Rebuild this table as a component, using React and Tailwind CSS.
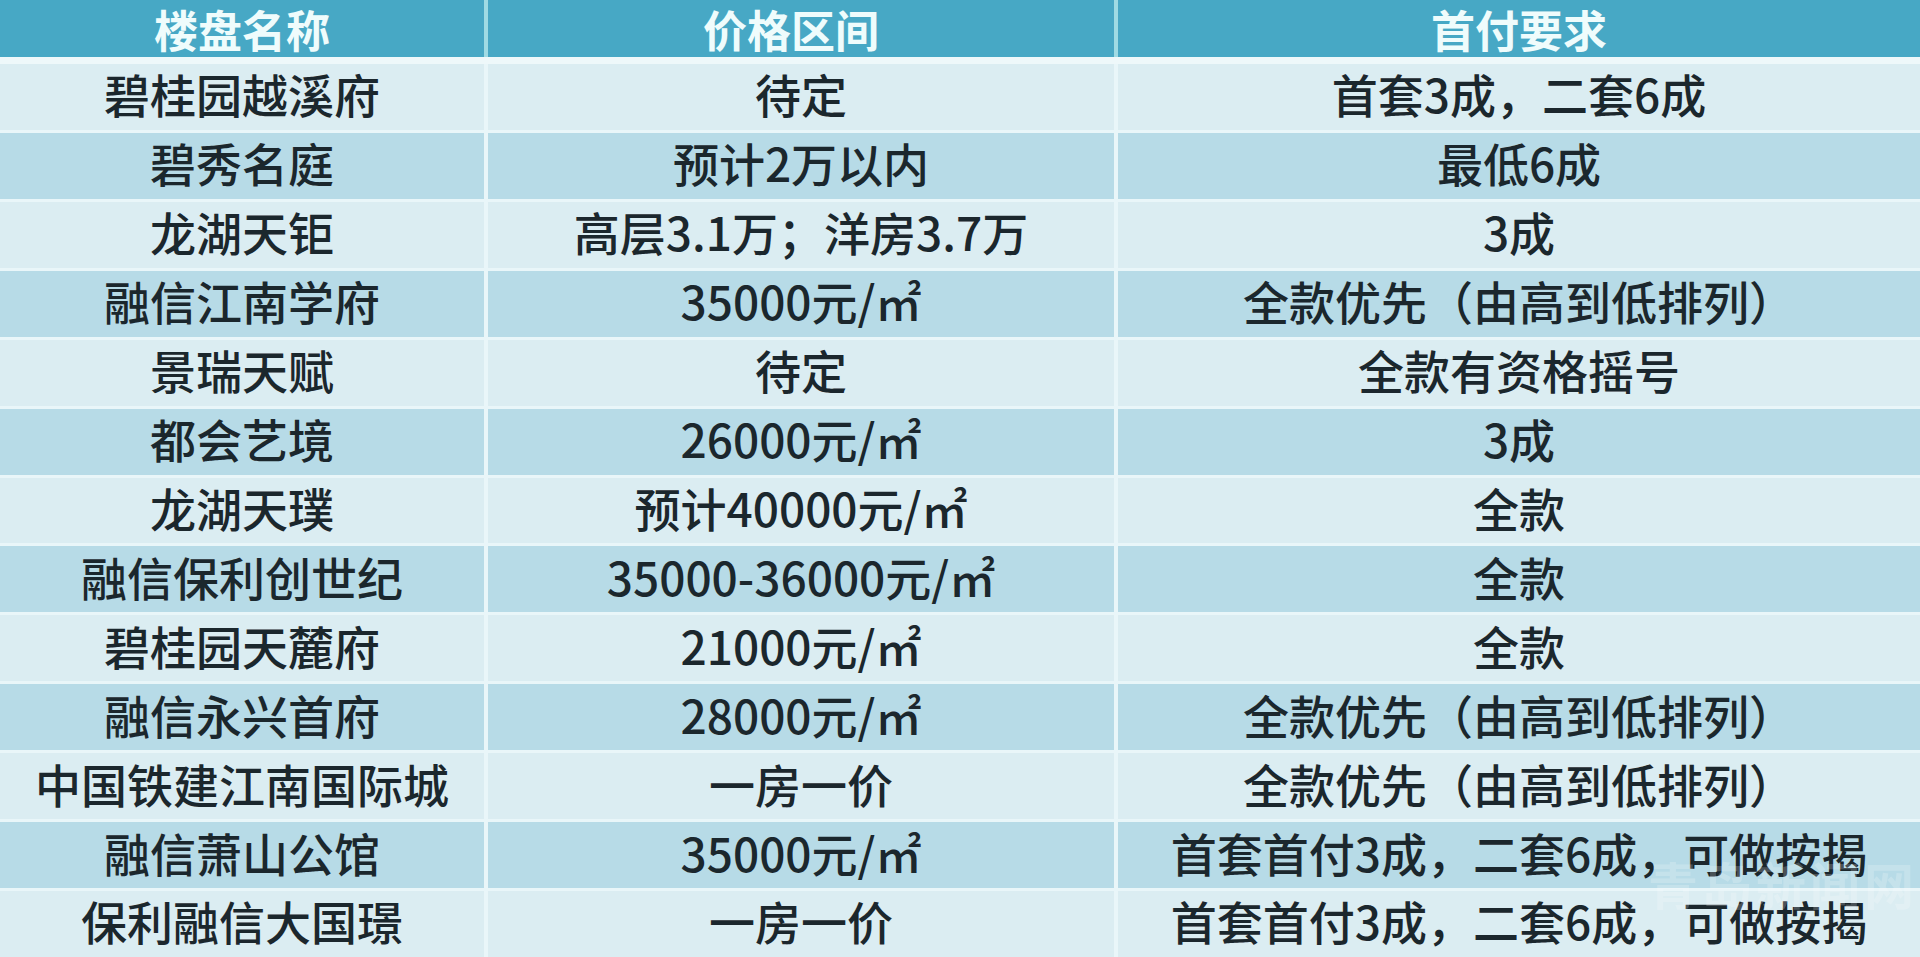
import React from "react";

const rows = [
  ["碧桂园越溪府", "待定", "首套3成，二套6成"],
  ["碧秀名庭", "预计2万以内", "最低6成"],
  ["龙湖天钜", "高层3.1万；洋房3.7万", "3成"],
  ["融信江南学府", "35000元/㎡", "全款优先（由高到低排列）"],
  ["景瑞天赋", "待定", "全款有资格摇号"],
  ["都会艺境", "26000元/㎡", "3成"],
  ["龙湖天璞", "预计40000元/㎡", "全款"],
  ["融信保利创世纪", "35000-36000元/㎡", "全款"],
  ["碧桂园天麓府", "21000元/㎡", "全款"],
  ["融信永兴首府", "28000元/㎡", "全款优先（由高到低排列）"],
  ["中国铁建江南国际城", "一房一价", "全款优先（由高到低排列）"],
  ["融信萧山公馆", "35000元/㎡", "首套首付3成，二套6成，可做按揭"],
  ["保利融信大国璟", "一房一价", "首套首付3成，二套6成，可做按揭"],
];

function Cell({ children, bg }) {
  return (
    <div className={`flex items-center justify-center pb-[6px] whitespace-nowrap ${bg}`}>
      {children}
    </div>
  );
}

export default function App() {
  return (
    <div className="relative w-[1920px] h-[957px] overflow-hidden flex flex-col bg-[#eef8fa] font-['Noto_Sans_CJK_SC',sans-serif] text-[46px] leading-[1.2] font-medium text-[#1b272d]">
      <div className="h-[57px] grid grid-cols-[484px_626px_1fr] gap-x-[4px] bg-[#9fdbe4]">
        <div className="flex items-center justify-center bg-[#47a8c5] font-bold text-[44px] leading-none text-[#effcfc]">楼盘名称</div>
        <div className="flex items-center justify-center pr-[20px] bg-[#47a8c5] font-bold text-[44px] leading-none text-[#effcfc]">价格区间</div>
        <div className="flex items-center justify-center bg-[#47a8c5] font-bold text-[44px] leading-none text-[#effcfc]">首付要求</div>
      </div>
      <div className="mt-[7px] flex-1 flex flex-col gap-y-[3px] bg-[#e9f6f9]">
        {rows.map((r, i) => {
          const bg = i % 2 === 0 ? "bg-[#dbedf2]" : "bg-[#b7dbe7]";
          return (
            <div key={i} className="flex-1 grid grid-cols-[484px_626px_1fr] gap-x-[4px]">
              <Cell bg={bg}>{r[0]}</Cell>
              <Cell bg={bg}>{r[1]}</Cell>
              <Cell bg={bg}>{r[2]}</Cell>
            </div>
          );
        })}
      </div>
      <div className="pointer-events-none absolute right-[2px] bottom-[44px] text-[50px] font-bold text-white opacity-20 tracking-[4px]">
        青岛新闻网
      </div>
    </div>
  );
}
